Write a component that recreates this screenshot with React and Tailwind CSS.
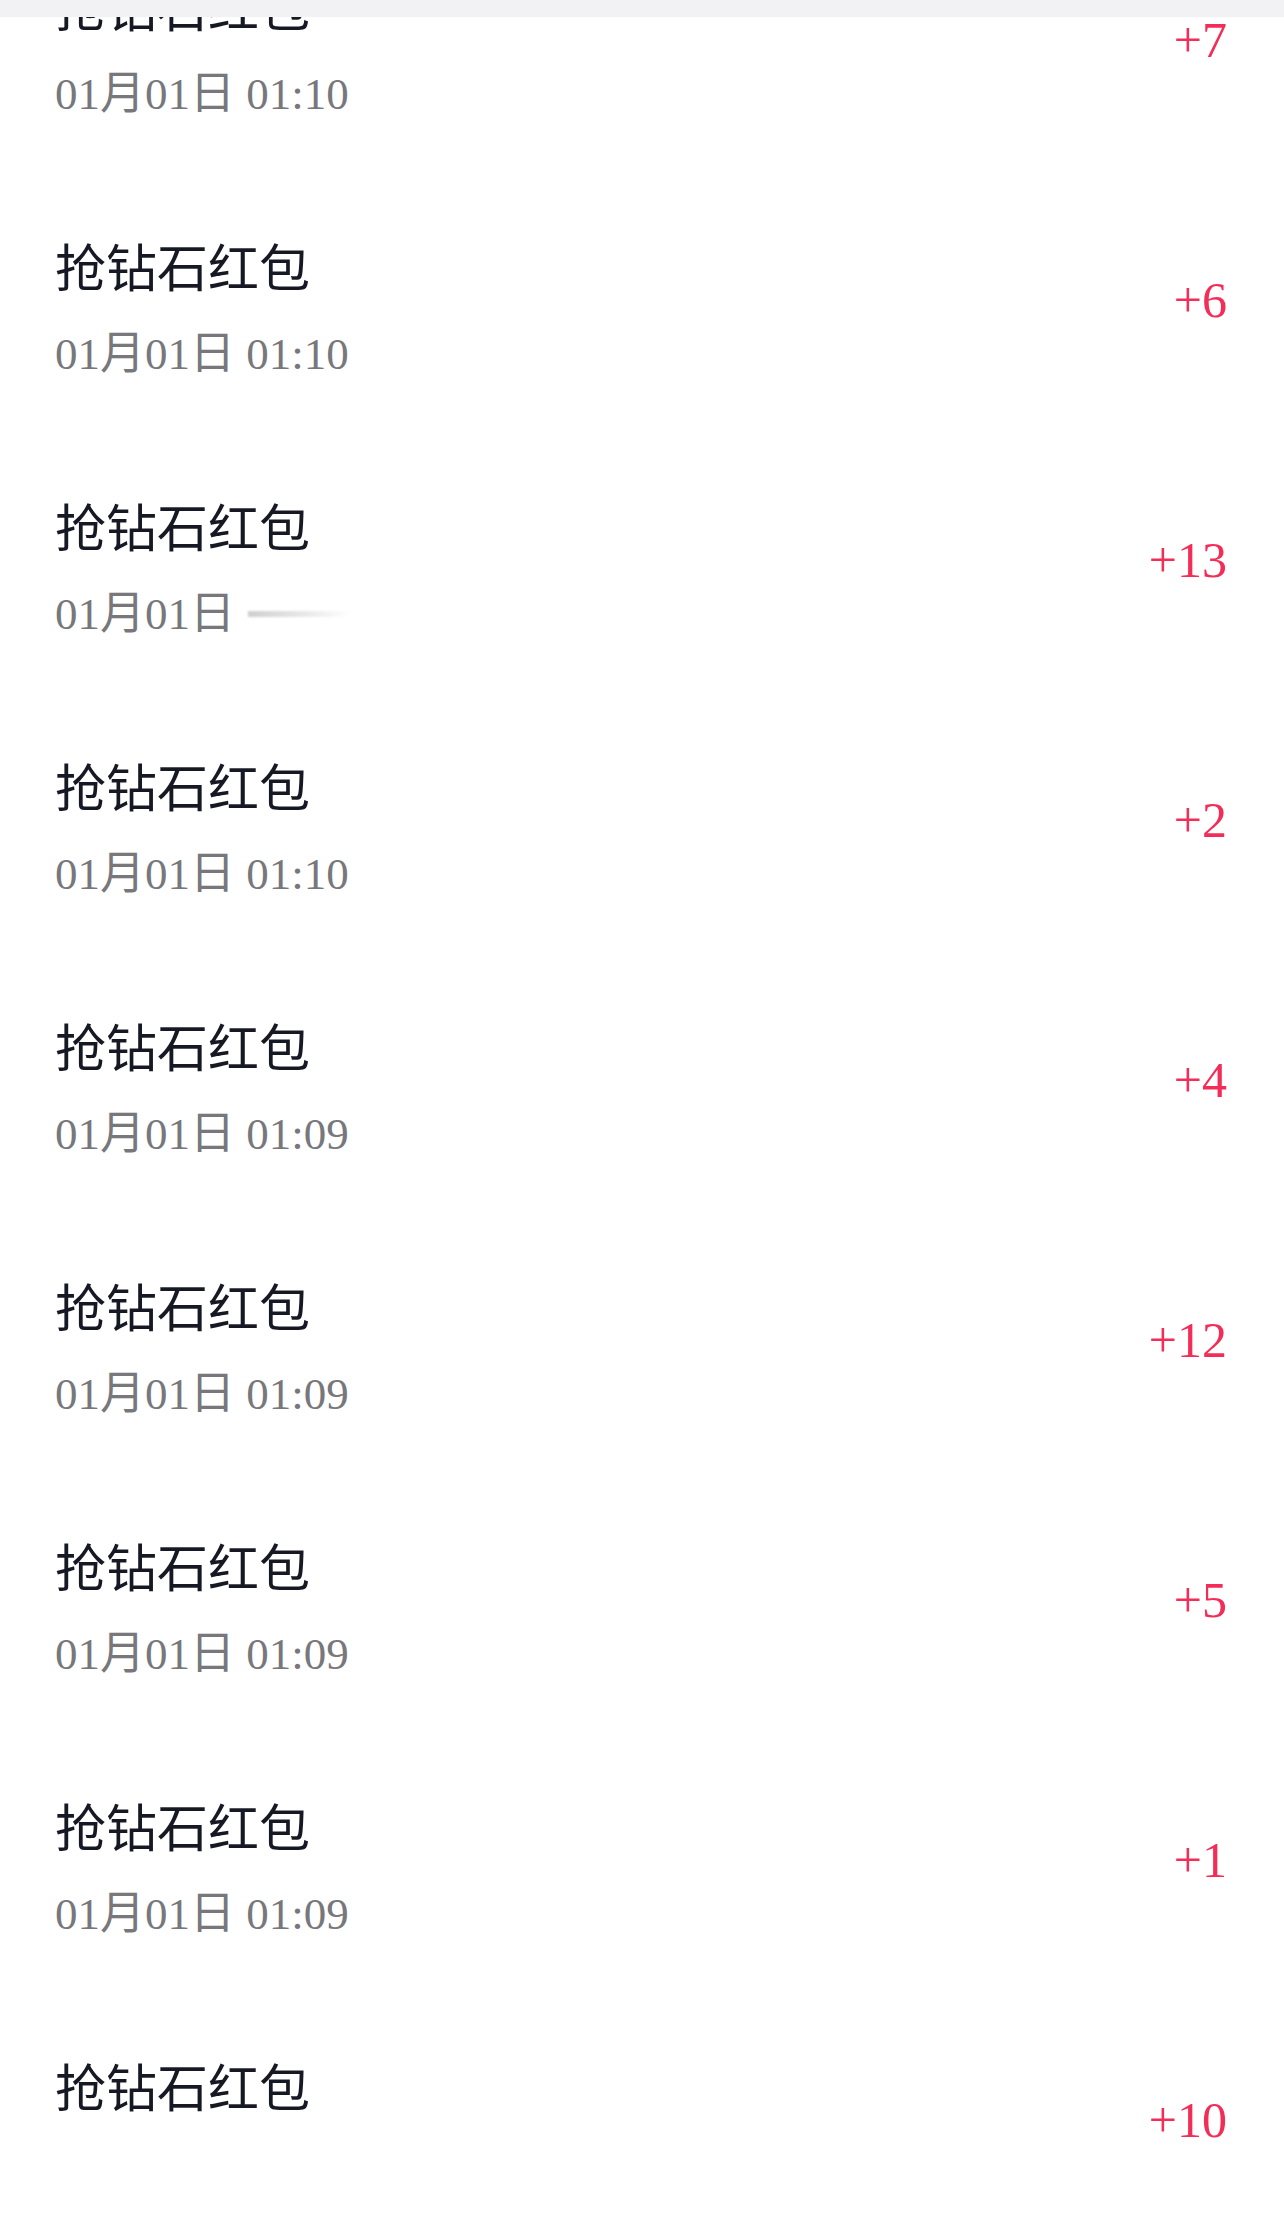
import React from "react";

const rows = [
  { amount: "+7", time: "01:10" },
  { amount: "+6", time: "01:10" },
  { amount: "+13", time: null, blurred: true },
  { amount: "+2", time: "01:10" },
  { amount: "+4", time: "01:09" },
  { amount: "+12", time: "01:09" },
  { amount: "+5", time: "01:09" },
  { amount: "+1", time: "01:09" },
  { amount: "+10", time: "01:09", hideDate: true },
];

function Row({ row }) {
  return (
    <div className="flex h-[260px] items-center justify-between pl-[55px] pr-[57px]">
      <div className="flex flex-col pt-[13px]">
        <div
          className="h-[60px] text-[51px] leading-[60px] text-[#161823]"
          style={{ fontFamily: '"Noto Sans CJK SC", "Noto Sans", sans-serif' }}
        >
          抢钻石红包
        </div>
        <div
          className={
            "mt-[34px] flex h-[50px] items-center text-[45px] leading-[50px] text-[#77777c] " +
            (row.hideDate ? "invisible" : "")
          }
          style={{ fontFamily: '"Liberation Serif", "Noto Sans CJK SC", serif' }}
        >
          <span>01月01日</span>
          {row.blurred ? (
            <span className="ml-[13px] h-[6px] w-[102px] bg-linear-to-r from-[#cfcfcf] via-[#e6e6e6] to-white blur-[1px]" />
          ) : (
            <span className="whitespace-pre"> {row.time}</span>
          )}
        </div>
      </div>
      <div
        className="text-[50px] leading-[60px] text-[#f42d58]"
        style={{ fontFamily: '"Liberation Serif", serif' }}
      >
        {row.amount}
      </div>
    </div>
  );
}

export default function App() {
  return (
    <div className="relative h-[2214px] w-[1284px] overflow-hidden bg-white">
      <div className="mt-[-90px] flex flex-col">
        {rows.map((r, i) => (
          <Row key={i} row={r} />
        ))}
      </div>
      <div className="absolute left-0 top-0 h-[17px] w-full bg-[#f2f2f4]" />
    </div>
  );
}
